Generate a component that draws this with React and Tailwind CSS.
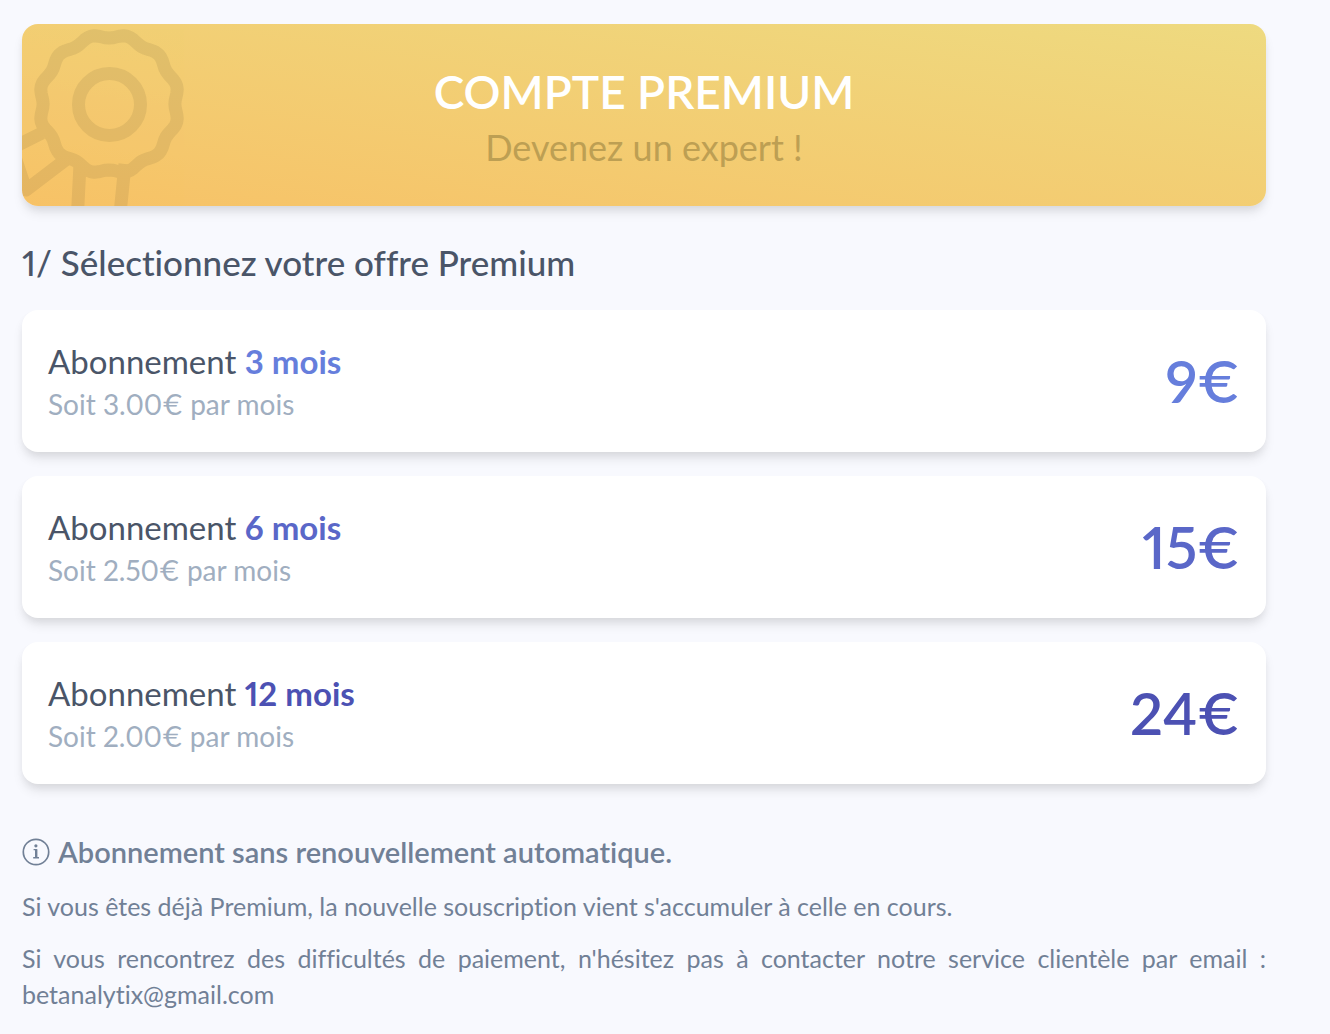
import React, { useState } from 'react';

const offers = [
  { id: 3, duration: '3 mois', monthly: '3.00€', price: '9€', color: 'text-[#667edc]' },
  { id: 6, duration: '6 mois', monthly: '2.50€', price: '15€', color: 'text-[#5a67c8]' },
  { id: 12, duration: '12 mois', monthly: '2.00€', price: '24€', color: 'text-[#4c51b3]' },
];

// Scalloped outline of the medal, 12 bumps around (cx, cy)
const medalOutline = (cx, cy) => {
  const points = [];
  for (let a = 0; a < 360; a += 3) {
    const rad = (a * Math.PI) / 180;
    const r = 68 - 2.1 * Math.cos(12 * rad);
    points.push(`${(cx + r * Math.sin(rad)).toFixed(1)} ${(cy - r * Math.cos(rad)).toFixed(1)}`);
  }
  return `M${points.join('L')}Z`;
};

const MedalIcon = ({ className }) => (
  <svg
    viewBox="0 0 170 182"
    className={className}
    fill="none"
    stroke="currentColor"
    strokeWidth="13"
    strokeLinejoin="round"
    aria-hidden="true"
  >
    <path d={medalOutline(87, 80)} />
    <circle cx="87.5" cy="80.5" r="31" />
    <path d="M58 140 L55 200 M103 140 L97 200" />
    <path d="M20 109 L-10 124 L4 166 L46 134" />
  </svg>
);

const InfoIcon = () => (
  <svg viewBox="0 0 28 28" className="size-7 shrink-0" fill="none" stroke="currentColor" aria-hidden="true">
    <circle cx="14" cy="14" r="12.7" strokeWidth="1.7" />
    <path d="M14.2 11.2v8.4" strokeWidth="2.4" />
    <path d="M11.6 11.6h3.2M11.2 19.8h5.8" strokeWidth="1.4" />
    <circle cx="13.9" cy="7.8" r="1.6" fill="currentColor" stroke="none" />
  </svg>
);

const OfferCard = ({ offer, selected, onSelect }) => (
  <button
    type="button"
    aria-pressed={selected}
    onClick={() => onSelect(offer.id)}
    className="flex w-full cursor-pointer items-center justify-between rounded-2xl bg-white px-[26px] py-7 text-left shadow-[0_8px_12px_-2px_rgba(0,0,0,0.1),0_4px_8px_-2px_rgba(0,0,0,0.06)]"
  >
    <span className="flex flex-col">
      <span className="text-[33px] leading-[46px] text-[#4a5568]">
        Abonnement <span className={`font-bold ${offer.color}`}>{offer.duration}</span>
      </span>
      <span className="text-[28px] leading-10 text-[#a0aec0]">Soit {offer.monthly} par mois</span>
    </span>
    <span className={`text-[58px] leading-none font-semibold ${offer.color}`}>{offer.price}</span>
  </button>
);

const App = () => {
  const [selected, setSelected] = useState(null);

  return (
    <main className="min-h-screen bg-[#f8f9fe] pt-6 pr-16 pb-5 pl-[22px] font-[Lato,sans-serif] proportional-nums [font-variant-ligatures:none]">
      {/* Banner */}
      <header className="relative overflow-hidden rounded-2xl bg-linear-[8deg] from-[#f7c267] to-[#eeda80] pt-10 pb-8 text-center shadow-[0_8px_12px_-2px_rgba(0,0,0,0.1),0_4px_8px_-2px_rgba(0,0,0,0.06)]">
        <MedalIcon className="absolute top-0 left-0 h-[182px] text-black opacity-[0.07]" />
        <h1 className="text-[46px] leading-[56px] font-semibold text-white">COMPTE PREMIUM</h1>
        <p className="text-4xl leading-[54px] text-[#bd9f53]">Devenez un expert !</p>
      </header>

      {/* Offers */}
      <h2 className="mt-8 mb-6 text-[35px] leading-[48px] font-medium text-[#4a5568]">
        1/ Sélectionnez votre offre Premium
      </h2>
      <div className="flex flex-col gap-6">
        {offers.map((offer) => (
          <OfferCard key={offer.id} offer={offer} selected={selected === offer.id} onSelect={setSelected} />
        ))}
      </div>

      {/* Notes */}
      <section className="mt-12 text-[25px] leading-9 text-[#718096]">
        <h3 className="flex items-center gap-2 text-[29px] leading-10 font-semibold">
          <InfoIcon />
          Abonnement sans renouvellement automatique.
        </h3>
        <p className="mt-4">
          Si vous êtes déjà Premium, la nouvelle souscription vient s'accumuler à celle en cours.
        </p>
        <p className="mt-4 text-justify">
          Si vous rencontrez des difficultés de paiement, n'hésitez pas à contacter notre service clientèle par
          email : betanalytix@gmail.com
        </p>
      </section>
    </main>
  );
};

export default App;
